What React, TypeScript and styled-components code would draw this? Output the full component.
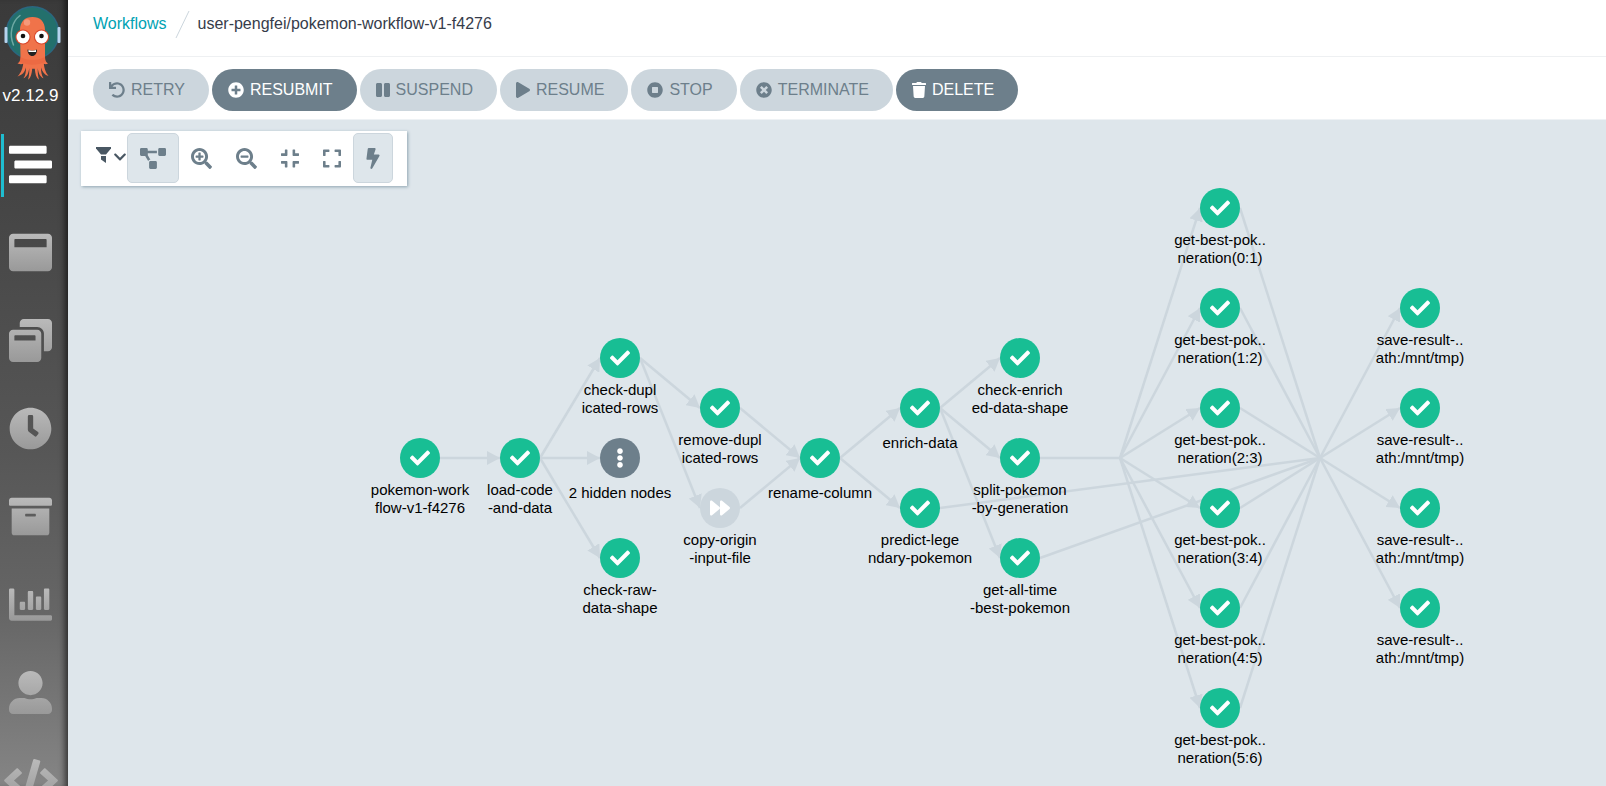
import React from "react";
import styled, { createGlobalStyle, css } from "styled-components";
import type { IconType } from "react-icons";
import {
  FaArchive,
  FaBolt,
  FaChartBar,
  FaCheck,
  FaChevronDown,
  FaClock,
  FaCode,
  FaCompress,
  FaEllipsisV,
  FaExpand,
  FaForward,
  FaPause,
  FaPlay,
  FaPlusCircle,
  FaProjectDiagram,
  FaSearchMinus,
  FaSearchPlus,
  FaStopCircle,
  FaStream,
  FaTimesCircle,
  FaTrash,
  FaUndo,
  FaUserAlt,
  FaWindowMaximize,
  FaWindowRestore,
} from "react-icons/fa";

const color = {
  canvas: "#dee6eb",
  line: "#ccd6dd",
  slate: "#6d7f8b",
  slateDark: "#495763",
  ink: "#363c4a",
  link: "#00a2b3",
  success: "#18be94",
  accent: "#1fbdd0",
};

const GlobalStyle = createGlobalStyle`
  *, *::before, *::after { box-sizing: border-box; }
  body {
    margin: 0;
    background: ${color.canvas};
    font-family: "Liberation Sans", Arial, Helvetica, sans-serif;
    font-size: 16px;
    color: ${color.ink};
  }
  button { font: inherit; cursor: pointer; }
`;

const Layout = styled.div`
  display: flex;
  min-height: 100vh;
`;

/* The icon set mixes narrow and wide glyphs, so each one gets its own box. */
const Glyph = styled.span<{ $w: number; $h: number }>`
  flex: none;
  display: block;
  width: ${(p) => p.$w}px;
  height: ${(p) => p.$h}px;

  svg {
    display: block;
    width: 100%;
    height: 100%;
  }
`;

/* ---------- Sidebar ---------- */

const Sidebar = styled.aside`
  flex: 0 0 68px;
  position: sticky;
  top: 0;
  height: 100vh;
  overflow: hidden;
  padding-right: 7px;
  background: linear-gradient(#3a3a3a 0%, #464646 27%, #575757 58%, #666 78%, #858585 100%);
  box-shadow: inset -7px 0 6px -4px rgba(0, 0, 0, 0.6);
`;

const Brand = styled.div`
  display: flex;
  flex-direction: column;
  align-items: center;
  height: 120px;
  padding-top: 4px;
  color: #fff;

  svg {
    display: block;
    flex: none;
  }
`;

const Version = styled.span`
  margin-top: 4px;
  font-size: 17px;
  line-height: 20px;
`;

const Nav = styled.nav`
  display: flex;
  flex-direction: column;
`;

const NavLink = styled.a<{ $active?: boolean }>`
  position: relative;
  flex: none;
  display: flex;
  align-items: center;
  justify-content: center;
  height: 88px;
  color: #fff;

  ${(p) =>
    p.$active
      ? css`
          &::before {
            content: "";
            position: absolute;
            left: 1px;
            top: 14px;
            width: 3px;
            height: 63px;
            background: ${color.accent};
          }
        `
      : css`
          svg path {
            fill: url(#nav-icon-shade);
          }
        `}
`;

const HiddenDefs = styled.svg`
  position: absolute;
  width: 0;
  height: 0;
`;

/* ---------- Header ---------- */

const Main = styled.main`
  flex: 1;
  min-width: 0;
  display: flex;
  flex-direction: column;
`;

const TopBar = styled.header`
  display: flex;
  align-items: flex-start;
  height: 57px;
  padding: 9px 25px 0;
  background: #fff;
  border-bottom: 1px solid #eef0f2;
`;

const Crumbs = styled.nav`
  display: flex;
  align-items: center;
  gap: 8px;
  height: 30px;

  a {
    color: ${color.link};
    text-decoration: none;
  }
`;

const Actions = styled.div`
  display: flex;
  flex-wrap: wrap;
  gap: 3px;
  padding: 12px 25px 8px;
  background: #fff;
  border-bottom: 1px solid #eef2f5;
`;

const ActionButton = styled.button`
  display: flex;
  align-items: center;
  gap: 6px;
  height: 42px;
  padding: 0 24px 0 16px;
  border: 0;
  border-radius: 21px;
  background: ${color.slate};
  color: #fff;
  text-transform: uppercase;

  &:disabled {
    background: ${color.line};
    color: ${color.slate};
    cursor: default;
  }
`;

/* ---------- Graph ---------- */

const Canvas = styled.section`
  position: relative;
  flex: 1;
  min-height: 666px;
  padding: 11px 13px;
  background: ${color.canvas};
`;

const Panel = styled.div`
  position: relative;
  z-index: 1;
  display: inline-flex;
  padding: 2px 14px 3px;
  background: #fff;
  box-shadow: 1px 1px 3px #8fa4b1;
`;

const FilterButton = styled.button`
  display: flex;
  align-items: center;
  gap: 1px;
  padding: 0 0 6px;
  border: 0;
  background: none;
  color: ${color.slateDark};

  svg:last-child {
    margin-top: 4px;
  }
`;

const PanelButton = styled.button<{ $on?: boolean }>`
  display: flex;
  align-items: center;
  height: 50px;
  padding: 0 12px;
  border: ${(p) => (p.$on ? `1px solid ${color.line}` : "0")};
  border-radius: 5px;
  background: ${(p) => (p.$on ? color.canvas : "none")};
  color: ${color.slate};
`;

const Edges = styled.svg`
  position: absolute;
  inset: 0;
  width: 100%;
  height: 100%;
  overflow: visible;

  line {
    stroke: ${color.line};
    stroke-width: 2.5;
  }
  marker path {
    fill: ${color.line};
  }
`;

const NODE_WIDTH = 120;

const NodeBox = styled.div<{ $x: number; $y: number }>`
  position: absolute;
  left: ${(p) => p.$x - NODE_WIDTH / 2}px;
  top: ${(p) => p.$y - 20}px;
  width: ${NODE_WIDTH}px;
  display: flex;
  flex-direction: column;
  align-items: center;
`;

type Phase = "succeeded" | "skipped" | "collapsed";

const phaseColor: Record<Phase, string> = {
  succeeded: color.success,
  skipped: color.line,
  collapsed: color.slate,
};

const phaseIcon: Record<Phase, IconType> = {
  succeeded: FaCheck,
  skipped: FaForward,
  collapsed: FaEllipsisV,
};

const Disc = styled.div<{ $phase: Phase }>`
  display: flex;
  align-items: center;
  justify-content: center;
  width: 40px;
  height: 40px;
  border-radius: 50%;
  background: ${(p) => phaseColor[p.$phase]};
  color: #fff;
  font-size: 20px;
`;

const Label = styled.div<{ $single: boolean }>`
  margin-top: ${(p) => (p.$single ? 6 : 3)}px;
  color: #000;
  font-size: 15px;
  line-height: 18px;
  text-align: center;
  white-space: pre;
`;

/* ---------- Data ---------- */

interface NavItem {
  label: string;
  icon: IconType;
  width?: number;
  active?: boolean;
}

const navItems: NavItem[] = [
  { label: "Workflows", icon: FaStream, active: true },
  { label: "Workflow Templates", icon: FaWindowMaximize },
  { label: "Cluster Workflow Templates", icon: FaWindowRestore },
  { label: "Cron Workflows", icon: FaClock },
  { label: "Archived Workflows", icon: FaArchive },
  { label: "Reports", icon: FaChartBar },
  { label: "User", icon: FaUserAlt },
  { label: "API Docs", icon: FaCode, width: 54 },
];

interface Action {
  label: string;
  icon: IconType;
  width?: number;
  enabled?: boolean;
}

const actions: Action[] = [
  { label: "Retry", icon: FaUndo },
  { label: "Resubmit", icon: FaPlusCircle, enabled: true },
  { label: "Suspend", icon: FaPause, width: 14 },
  { label: "Resume", icon: FaPlay, width: 14 },
  { label: "Stop", icon: FaStopCircle },
  { label: "Terminate", icon: FaTimesCircle },
  { label: "Delete", icon: FaTrash, width: 14, enabled: true },
];

const panelTools: { label: string; icon: IconType; width: number; on?: boolean }[] = [
  { label: "Horizontal layout", icon: FaProjectDiagram, width: 26, on: true },
  { label: "Zoom in", icon: FaSearchPlus, width: 21 },
  { label: "Zoom out", icon: FaSearchMinus, width: 21 },
  { label: "Collapse", icon: FaCompress, width: 18 },
  { label: "Expand", icon: FaExpand, width: 18 },
  { label: "Fast rendering", icon: FaBolt, width: 14, on: true },
];

interface GraphNode {
  id: string;
  x: number;
  y: number;
  lines: string[];
  phase?: Phase;
}

const bestIds = [0, 1, 2, 3, 4, 5].map((i) => `best-${i}`);
const saveIds = [0, 1, 2, 3].map((i) => `save-${i}`);

const nodes: GraphNode[] = [
  { id: "root", x: 352, y: 338, lines: ["pokemon-work", "flow-v1-f4276"] },
  { id: "load", x: 452, y: 338, lines: ["load-code", "-and-data"] },
  { id: "dup", x: 552, y: 238, lines: ["check-dupl", "icated-rows"] },
  { id: "hidden", x: 552, y: 338, lines: ["2 hidden nodes"], phase: "collapsed" },
  { id: "raw", x: 552, y: 438, lines: ["check-raw-", "data-shape"] },
  { id: "remove", x: 652, y: 288, lines: ["remove-dupl", "icated-rows"] },
  { id: "copy", x: 652, y: 388, lines: ["copy-origin", "-input-file"], phase: "skipped" },
  { id: "rename", x: 752, y: 338, lines: ["rename-column"] },
  { id: "enrich", x: 852, y: 288, lines: ["enrich-data"] },
  { id: "predict", x: 852, y: 388, lines: ["predict-lege", "ndary-pokemon"] },
  { id: "shape", x: 952, y: 238, lines: ["check-enrich", "ed-data-shape"] },
  { id: "split", x: 952, y: 338, lines: ["split-pokemon", "-by-generation"] },
  { id: "alltime", x: 952, y: 438, lines: ["get-all-time", "-best-pokemon"] },
  ...bestIds.map((id, i) => ({
    id,
    x: 1152,
    y: 88 + 100 * i,
    lines: ["get-best-pok..", `neration(${i}:${i + 1})`],
  })),
  ...saveIds.map((id, i) => ({
    id,
    x: 1352,
    y: 188 + 100 * i,
    lines: ["save-result-..", "ath:/mnt/tmp)"],
  })),
];

/* Points without a disc, where several edges meet. */
const joints: Record<string, { x: number; y: number }> = {
  fanOut: { x: 1052, y: 338 },
  fanIn: { x: 1252, y: 338 },
};

const edges: [string, string][] = [
  ["root", "load"],
  ["load", "dup"],
  ["load", "hidden"],
  ["load", "raw"],
  ["dup", "remove"],
  ["dup", "copy"],
  ["remove", "rename"],
  ["copy", "rename"],
  ["rename", "enrich"],
  ["rename", "predict"],
  ["enrich", "shape"],
  ["enrich", "split"],
  ["enrich", "alltime"],
  ["split", "fanOut"],
  ...bestIds.map((id): [string, string] => ["fanOut", id]),
  ["predict", "fanIn"],
  ["alltime", "fanIn"],
  ...bestIds.map((id): [string, string] => [id, "fanIn"]),
  ...saveIds.map((id): [string, string] => ["fanIn", id]),
];

const anchor = (id: string, side: 1 | -1) => {
  if (joints[id]) return joints[id];
  const node = nodes.find((n) => n.id === id)!;
  return { x: node.x + 20 * side, y: node.y };
};

/* ---------- Drawings ---------- */

const Logo = () => (
  <svg width="60" height="78" viewBox="0 0 60 78" role="img" aria-label="Argo">
    <circle cx="31.500" cy="29" r="27" fill="#2b6780" />
    <circle cx="31.500" cy="29" r="25.500" fill="#23706c" />
    <path d="M12.500 41C8 30 10.500 18 19 11.500" fill="none" stroke="#6fa9a4" strokeWidth="1.500" strokeLinecap="round" />
    <rect x="3.500" y="23" width="3" height="16" rx="1" fill="#b5d3ee" />
    <rect x="56.500" y="23" width="3" height="16" rx="1" fill="#b5d3ee" />
    <path
      d="M19 26C19 17.500 24 13 31.500 13S44 17.500 44 26V53c0 3.500 1.200 5.500 3 6.500-1.500.8-3 .8-4.200.3.500 4 1.200 8.200 4.700 12.200-3.800-1-6.300-4-7.500-8.500 0 4 .5 8 2.500 10.800-3.500-1.300-5-5-5.700-10-.3 4 .2 8 1.200 11.500-2.800-2-3.800-6-4.200-11l-1.300 0 -1.300 0c-.4 5-1.400 9-4.200 11 1-3.500 1.500-7.500 1.200-11.500-.7 5-2.200 8.700-5.700 10 2-2.800 2.500-6.800 2.500-10.800-1.200 4.500-3.700 7.500-8.500 9 4-4 5.200-8.700 5.700-12.700-1.200.5-3.200.5-5.700-.3 1.800-1 3-3 3-6.500z"
      fill="#f0734a"
    />
    <path d="M19 53c8 4 17 4 25 0v5c-8 3.500-17 3.500-25 0z" fill="#e65f3c" opacity="0.450" />
    <circle cx="26" cy="18.500" r="3.200" fill="#f5997a" />
    <circle cx="22" cy="33" r="7.600" fill="#d9472b" />
    <circle cx="40.500" cy="33" r="7.600" fill="#d9472b" />
    <circle cx="22" cy="33" r="6.500" fill="#fff" />
    <circle cx="40.500" cy="33" r="6.500" fill="#fff" />
    <circle cx="22" cy="32" r="2.300" fill="#111" />
    <circle cx="40.500" cy="32" r="2.300" fill="#111" />
    <path d="M26.500 45.500c3 1.500 6.500 1.500 9.500 0 0 4-2 6.500-4.700 6.500s-4.800-2.500-4.800-6.500z" fill="#222" />
    <path d="M27.500 46c2.500 1 5 1 7.500 0v2h-7.500z" fill="#fff" />
  </svg>
);

const CrumbSlash = () => (
  <svg width="15" height="30" viewBox="0 0 15 30" aria-hidden="true">
    <path d="M1 29L14 2" stroke={color.line} fill="none" />
  </svg>
);

const FunnelIcon = () => (
  <svg width="17" height="18" viewBox="0 0 17 18" fill="currentColor" aria-hidden="true">
    <path d="M1 1h15v1.500L11 8.500H6L1 2.500z" />
    <path d="M6 10h5v7l-1.500-1L6 13.500z" />
  </svg>
);

/* ---------- Page ---------- */

export default function App() {
  return (
    <>
      <GlobalStyle />
      <HiddenDefs aria-hidden="true">
        <defs>
          <linearGradient id="nav-icon-shade" x1="0" y1="0" x2="0" y2="1">
            <stop offset="0" stopColor="#bababa" />
            <stop offset="1" stopColor="#999" />
          </linearGradient>
        </defs>
      </HiddenDefs>
      <Layout>
        <Sidebar>
          <Brand>
            <Logo />
            <Version>v2.12.9</Version>
          </Brand>
          <Nav aria-label="Main">
            {navItems.map(({ label, icon: Icon, width = 43, active }) => (
              <NavLink key={label} href="#" aria-label={label} $active={active}>
                <Glyph $w={width} $h={43}>
                  <Icon />
                </Glyph>
              </NavLink>
            ))}
          </Nav>
        </Sidebar>
        <Main>
          <TopBar>
            <Crumbs aria-label="Breadcrumb">
              <a href="#">Workflows</a>
              <CrumbSlash />
              <span>user-pengfei/pokemon-workflow-v1-f4276</span>
            </Crumbs>
          </TopBar>
          <Actions>
            {actions.map(({ label, icon: Icon, width = 16, enabled }) => (
              <ActionButton key={label} type="button" disabled={!enabled}>
                <Glyph $w={width} $h={16}>
                  <Icon />
                </Glyph>
                {label}
              </ActionButton>
            ))}
          </Actions>
          <Canvas>
            <Panel>
              <FilterButton type="button" aria-label="Filter">
                <FunnelIcon />
                <FaChevronDown size={14} />
              </FilterButton>
              {panelTools.map(({ label, icon: Icon, width, on }) => (
                <PanelButton key={label} type="button" aria-label={label} $on={on}>
                  <Glyph $w={width} $h={21}>
                    <Icon />
                  </Glyph>
                </PanelButton>
              ))}
            </Panel>
            <Edges aria-hidden="true">
              <defs>
                <marker
                  id="arrow"
                  markerUnits="userSpaceOnUse"
                  markerWidth="13"
                  markerHeight="14"
                  refX="13"
                  refY="7"
                  orient="auto"
                >
                  <path d="M0 0L13 7L0 14z" />
                </marker>
              </defs>
              {edges.map(([from, to]) => {
                const a = anchor(from, 1);
                const b = anchor(to, -1);
                return (
                  <line
                    key={`${from}-${to}`}
                    x1={a.x}
                    y1={a.y}
                    x2={b.x}
                    y2={b.y}
                    markerEnd={joints[to] ? undefined : "url(#arrow)"}
                  />
                );
              })}
            </Edges>
            {nodes.map(({ id, x, y, lines, phase = "succeeded" }) => {
              const Icon = phaseIcon[phase];
              return (
                <NodeBox key={id} $x={x} $y={y}>
                  <Disc $phase={phase}>
                    <Icon />
                  </Disc>
                  <Label $single={lines.length === 1}>{lines.join("\n")}</Label>
                </NodeBox>
              );
            })}
          </Canvas>
        </Main>
      </Layout>
    </>
  );
}
